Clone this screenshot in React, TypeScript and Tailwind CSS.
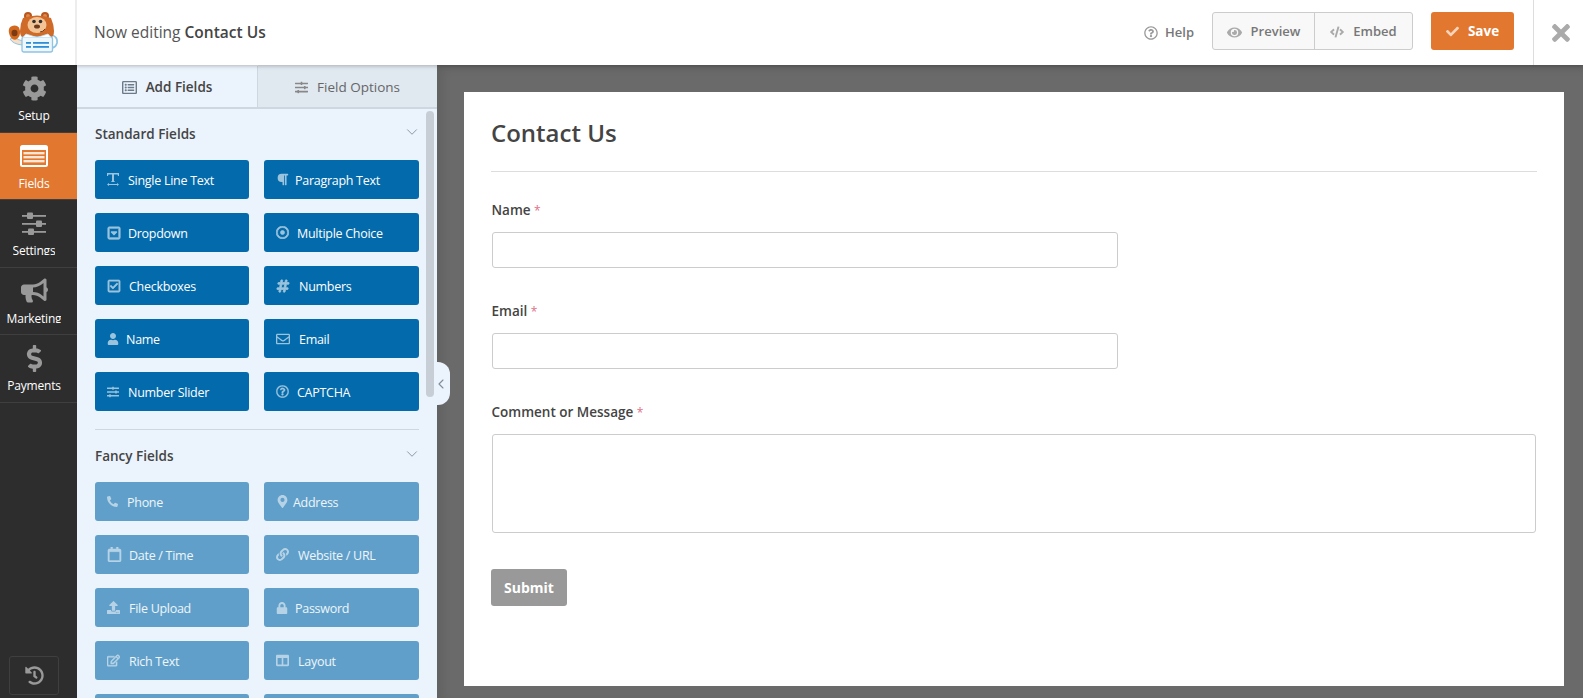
import React from "react";
import {
  FaCog, FaBullhorn, FaDollarSign, FaHistory, FaRegListAlt, FaParagraph, FaRegCaretSquareDown,
  FaRegDotCircle, FaRegCheckSquare, FaHashtag, FaUser, FaRegEnvelope, FaRegQuestionCircle, FaPhoneAlt,
  FaMapMarkerAlt, FaRegCalendar, FaLink, FaUpload, FaLock, FaRegEdit, FaColumns, FaEye, FaCode, FaCheck,
  FaTimes, FaSlidersH,
} from "react-icons/fa";
import { ChevronDown, ChevronLeft } from "lucide-react";

type IconT = React.ComponentType<{ className?: string }>;
type Field = { label: string; Icon: IconT; slot: string; size: string };

function TextWidthIcon({ className }: { className?: string }) {
  return (
    <svg viewBox="0 0 12 13" width="12" height="13" className={className} fill="currentColor" aria-hidden="true">
      <path d="M0 0h12v3h-1l-.4-1.4H7v6.6l1 .3V9H4v-.5l1-.3V1.600H1.400L1 3H0z" />
      <path d="M0 11.500l2-1.500v1h8v-1l2 1.500-2 1.500v-1H2v1z" />
    </svg>
  );
}

function FieldsIcon() {
  return (
    <svg viewBox="0 0 28 22" width="28" height="22" aria-hidden="true">
      <rect x="0" y="0" width="28" height="22" rx="2.500" fill="#fff" />
      <rect x="2" y="5" width="24" height="15" fill="#e27730" />
      <rect x="3.500" y="7" width="21" height="2.400" fill="#fbe6d8" />
      <rect x="3.500" y="11" width="21" height="2.400" fill="#fbe6d8" />
      <rect x="3.500" y="15" width="21" height="2.400" fill="#fbe6d8" />
    </svg>
  );
}

function SlidersIcon() {
  return (
    <svg viewBox="0 0 24 23" width="24" height="23" fill="#999" aria-hidden="true">
      <rect x="0" y="3" width="24" height="1.800" />
      <rect x="0" y="11" width="24" height="1.800" />
      <rect x="0" y="19" width="24" height="1.800" />
      <rect x="5" y="0.500" width="6" height="6.500" rx="1" />
      <rect x="14" y="8.500" width="6" height="6.500" rx="1" />
      <rect x="6" y="16.500" width="6" height="6.500" rx="1" />
    </svg>
  );
}

const standard: Field[] = [
  { label: "Single Line Text", Icon: TextWidthIcon, slot: "w-[21px]", size: "text-[13px]" },
  { label: "Paragraph Text", Icon: FaParagraph, slot: "w-[19px]", size: "text-[13px]" },
  { label: "Dropdown", Icon: FaRegCaretSquareDown, slot: "w-[21px]", size: "text-[14px] [&_svg]:stroke-[30]" },
  { label: "Multiple Choice", Icon: FaRegDotCircle, slot: "w-[21px]", size: "text-[13px] [&_svg]:stroke-[30]" },
  { label: "Checkboxes", Icon: FaRegCheckSquare, slot: "w-[22px]", size: "text-[14px] [&_svg]:stroke-[20]" },
  { label: "Numbers", Icon: FaHashtag, slot: "w-[23px]", size: "text-[14px] [&_svg]:stroke-[30]" },
  { label: "Name", Icon: FaUser, slot: "w-[19px]", size: "text-[12px]" },
  { label: "Email", Icon: FaRegEnvelope, slot: "w-[23px]", size: "text-[14px]" },
  { label: "Number Slider", Icon: FaSlidersH, slot: "w-[21px]", size: "text-[12px]" },
  { label: "CAPTCHA", Icon: FaRegQuestionCircle, slot: "w-[21px]", size: "text-[13px] [&_svg]:stroke-[10]" },
];

const fancy: Field[] = [
  { label: "Phone", Icon: FaPhoneAlt, slot: "w-[20px]", size: "text-[11px]" },
  { label: "Address", Icon: FaMapMarkerAlt, slot: "w-[17px]", size: "text-[13px]" },
  { label: "Date / Time", Icon: FaRegCalendar, slot: "w-[22px]", size: "text-[15px] [&_svg]:stroke-[15]" },
  { label: "Website / URL", Icon: FaLink, slot: "w-[22px]", size: "text-[13px]" },
  { label: "File Upload", Icon: FaUpload, slot: "w-[22px]", size: "text-[13px]" },
  { label: "Password", Icon: FaLock, slot: "w-[19px]", size: "text-[12px]" },
  { label: "Rich Text", Icon: FaRegEdit, slot: "w-[22px]", size: "text-[13px] [&_svg]:stroke-[20]" },
  { label: "Layout", Icon: FaColumns, slot: "w-[22px]", size: "text-[13px]" },
  { label: "", Icon: FaColumns, slot: "w-[22px]", size: "text-[0px]" },
  { label: "", Icon: FaColumns, slot: "w-[22px]", size: "text-[0px]" },
];

function Bear() {
  return (
    <svg width="54" height="42" viewBox="0 0 54 42" aria-hidden="true">
      <path d="M45 23 q6 2 5 8 q-1.500 5 -6 5" fill="none" stroke="#8fc4e4" strokeWidth="1.800" />
      <path d="M3 27 q3 5 12 6 l1 -4 q-6 -1 -8 -4z" fill="#f6dfc8" stroke="#8fc4e4" strokeWidth="1" />
      <circle cx="21" cy="4" r="4" fill="#b9561e" />
      <circle cx="38" cy="4" r="4" fill="#b9561e" />
      <circle cx="21" cy="4" r="2" fill="#de8a4c" />
      <circle cx="38" cy="4" r="2" fill="#de8a4c" />
      <path d="M16 6 q14 -5 28 0 q3 7 3 13 q0 6 -4 7 h-26 q-4 -1 -4 -7 q0 -7 3 -13z" fill="#cf6a28" />
      <ellipse cx="30" cy="13" rx="9.500" ry="8" fill="#f3c596" />
      <circle cx="27" cy="9.500" r="1.800" fill="#33302f" />
      <circle cx="33.500" cy="9.500" r="1.800" fill="#33302f" />
      <ellipse cx="30" cy="14.500" rx="3" ry="2" fill="#6d3a1c" />
      <path d="M33 20 q3 0 5 -3" stroke="#6d3a1c" strokeWidth="1" fill="none" />
      <path d="M2 21 q-1 -5 2 -6.500 q5 -2.500 8 1 q2 4 .5 8 q-2 5 -6 4 q-3.500 -1.500 -4.500 -6.500z" fill="#d2691f" />
      <ellipse cx="7.500" cy="21" rx="3" ry="3.200" fill="#7b3a14" />
      <rect x="15" y="25" width="30.500" height="15" rx="2" fill="#eef7fc" stroke="#8fc4e4" strokeWidth="1.300" />
      <path d="M19 22 l11 3.500 l11 -3.500 l3 3.500 h-28z" fill="#fff" stroke="#cde4f2" strokeWidth=".8" />
      <rect x="19" y="30" width="5" height="1.800" fill="#2e8fd6" />
      <rect x="26" y="30" width="16" height="1.800" fill="#2e8fd6" />
      <rect x="19" y="34" width="5" height="1.800" fill="#2e8fd6" />
      <rect x="26" y="34" width="16" height="1.800" fill="#2e8fd6" />
    </svg>
  );
}

function FieldButton({ f, light }: { f: Field; light?: boolean }) {
  const I = f.Icon;
  return (
    <div className={`h-[39px] rounded-[3px] flex items-center pl-3 text-[12.5px] tracking-[-0.28px] ${light ? "bg-[#5f9fc9] text-white/90" : "bg-[#036aab] text-white"}`}>
      <span className={`${f.slot} ${f.size} shrink-0 flex items-center opacity-60`}><I /></span>
      <span className="whitespace-nowrap pt-[4px]">{f.label}</span>
    </div>
  );
}

function Section({ title, fields, light, head, pad }: { title: string; fields: Field[]; light?: boolean; head: string; pad: string }) {
  return (
    <section>
      <div className={`${head} ${pad} flex items-start justify-between text-[#444] text-[13.5px] font-semibold`}>
        <span>{title}</span>
        <ChevronDown size={18} strokeWidth={1.3} className="text-[#8a97a5] -mt-[1px] -mr-[2px]" />
      </div>
      <div className="grid grid-cols-[154px_155px] gap-x-[15px] gap-y-[14px]">
        {fields.map((f, i) => <FieldButton key={i} f={f} light={light} />)}
      </div>
    </section>
  );
}

function NavItem({ label, icon, active, clip }: { label: string; icon: React.ReactNode; active?: boolean; clip?: boolean }) {
  return (
    <div className={`h-[67.5px] pr-[9px] flex flex-col items-center overflow-hidden border-b border-[#3f3f3f] text-[12px] tracking-[-0.2px] text-white ${active ? "bg-[#e27730]" : ""}`}>
      <span className="h-[42px] pt-[5px] pb-[1px] shrink-0 flex items-center justify-center text-[#999]">{icon}</span>
      <span className={`leading-[18px] ${clip ? "h-[13px] overflow-hidden" : ""}`}>{label}</span>
    </div>
  );
}

const Req = () => <span className="text-[#e0708a] font-normal text-[12px]">*</span>;

export default function App() {
  return (
    <div className="h-[698px] w-[1583px] overflow-hidden flex flex-col bg-[#6a6a6a] font-['Open_Sans','Noto_Sans',sans-serif] relative">
      <header className="h-[65px] shrink-0 bg-white flex items-center relative z-10 pb-[3px] shadow-[0_1px_4px_rgba(0,0,0,.25)]">
        <div className="w-[77px] h-[65px] -mb-[3px] border-r-2 border-[#ededed] flex items-center pl-[7px] pt-[1px]"><Bear /></div>
        <div className="pl-[17px] pt-[3px] text-[15.5px] text-[#555] flex-1">Now editing <span className="font-semibold text-[#444]">Contact Us</span></div>
        <div className="flex items-center text-[#777] text-[13px] font-semibold mr-[18px] pt-[3px]">
          <FaRegQuestionCircle className="text-[#999] text-[14px] mr-[7px]" />Help
        </div>
        <div className="h-[38px] w-[201px] flex rounded-[3px] border border-[#ccc] bg-[#f8f8f8] text-[#777] text-[13px] font-semibold mr-[18px]">
          <div className="w-[102px] pt-[2px] flex items-center justify-center border-r border-[#ccc]"><FaEye className="text-[#aaa] text-[15px] mr-[9px]" />Preview</div>
          <div className="flex-1 pt-[2px] flex items-center justify-center"><FaCode className="text-[#aaa] text-[14px] mr-[9px]" />Embed</div>
        </div>
        <div className="h-[38px] w-[83px] pt-[1px] rounded-[3px] bg-[#e27730] text-white text-[13.5px] font-bold flex items-center justify-center mr-[19px]">
          <FaCheck className="text-[#f6d3bb] text-[13px] mr-[9px]" />Save
        </div>
        <div className="w-[50px] h-[65px] -mb-[3px] border-l border-[#ddd] flex items-center justify-center pl-[5px]">
          <FaTimes className="text-[#aaa] text-[26px]" />
        </div>
      </header>
      <div className="flex-1 flex min-h-0">
        <nav className="w-[77px] shrink-0 bg-[#2d2d2d] flex flex-col relative">
          <NavItem label="Setup" icon={<FaCog className="text-[25px]" />} />
          <NavItem label="Fields" icon={<FieldsIcon />} active />
          <NavItem label="Settings" icon={<SlidersIcon />} clip />
          <NavItem label="Marketing" icon={<FaBullhorn className="text-[27px]" />} clip />
          <NavItem label="Payments" icon={<FaDollarSign className="text-[27px]" />} />
          <div className="absolute left-[9px] bottom-[3px] w-[50px] h-[39px] rounded-[3px] border border-[#3f3f3f] flex items-center justify-center text-[#999] text-[19px]"><FaHistory /></div>
        </nav>
        <aside className="w-[360px] shrink-0 bg-[#ebf3fc] relative">
          <div className="h-[44px] pt-[1px] flex border-b-2 border-[#ced7e0] text-[13.5px]">
            <div className="w-[181px] pt-[1px] flex items-center justify-center font-semibold text-[#444] border-r border-[#ced7e0]"><FaRegListAlt className="text-[#6b7b8a] text-[15px] mr-[9px]" />Add Fields</div>
            <div className="flex-1 pt-[2px] bg-[#e0e8f0] -mt-[1px] flex items-center justify-center text-[#666]"><FaSlidersH className="text-[#888] text-[13px] mr-[9px]" />Field Options</div>
          </div>
          <div className="h-[589px] overflow-hidden pl-[18px] pr-[18px]">
            <Section title="Standard Fields" fields={standard} head="h-[51px]" pad="pt-[15px]" />
            <div className="h-px bg-[#ced7e0] mt-[18px] w-[324px]" />
            <Section title="Fancy Fields" fields={fancy} light head="h-[52px]" pad="pt-[16px]" />
          </div>
          <div className="absolute left-[349px] top-[46px] w-[8px] h-[286px] rounded-[4px] bg-[#c8ced6]" />
          <div className="absolute left-[360px] top-[297px] w-[13px] h-[43px] bg-[#ebf3fc] rounded-r-[12px] flex items-center text-[#7f8c9a] z-10">
            <ChevronLeft size={16} strokeWidth={1.6} className="-ml-[4px]" />
          </div>
        </aside>
        <main className="flex-1 min-w-0 pl-[27px] pr-[19px] pt-[27px] pb-[12px] shadow-[inset_6px_4px_8px_rgba(0,0,0,.08)]">
          <div className="h-full bg-white pl-[27px] pr-[27px] pt-[25px] text-[#444]">
            <div className="h-[55px] border-b border-[#ddd] text-[24px] font-semibold leading-[32px] text-[#444]">Contact Us</div>
            <div className="pl-[1px] pt-[27px]">
              <div className="h-[33px] -ml-[0.5px] text-[13.5px] font-semibold leading-[22px]">Name <Req /></div>
              <div className="w-[626px] h-[36px] rounded-[3px] border border-[#ccc]" />
              <div className="h-[33px] mt-[32px] -ml-[0.5px] text-[13.5px] font-semibold leading-[22px]">Email <Req /></div>
              <div className="w-[626px] h-[36px] rounded-[3px] border border-[#ccc]" />
              <div className="h-[33px] mt-[32px] -ml-[0.5px] text-[13.5px] font-semibold leading-[22px]">Comment or Message <Req /></div>
              <div className="w-[1044px] h-[99px] rounded-[3px] border border-[#ccc]" />
              <div className="mt-[36px] w-[76px] h-[37px] rounded-[3px] bg-[#999] text-white text-[14px] font-bold flex items-center justify-center -ml-[1px]">Submit</div>
            </div>
          </div>
        </main>
      </div>
    </div>
  );
}
